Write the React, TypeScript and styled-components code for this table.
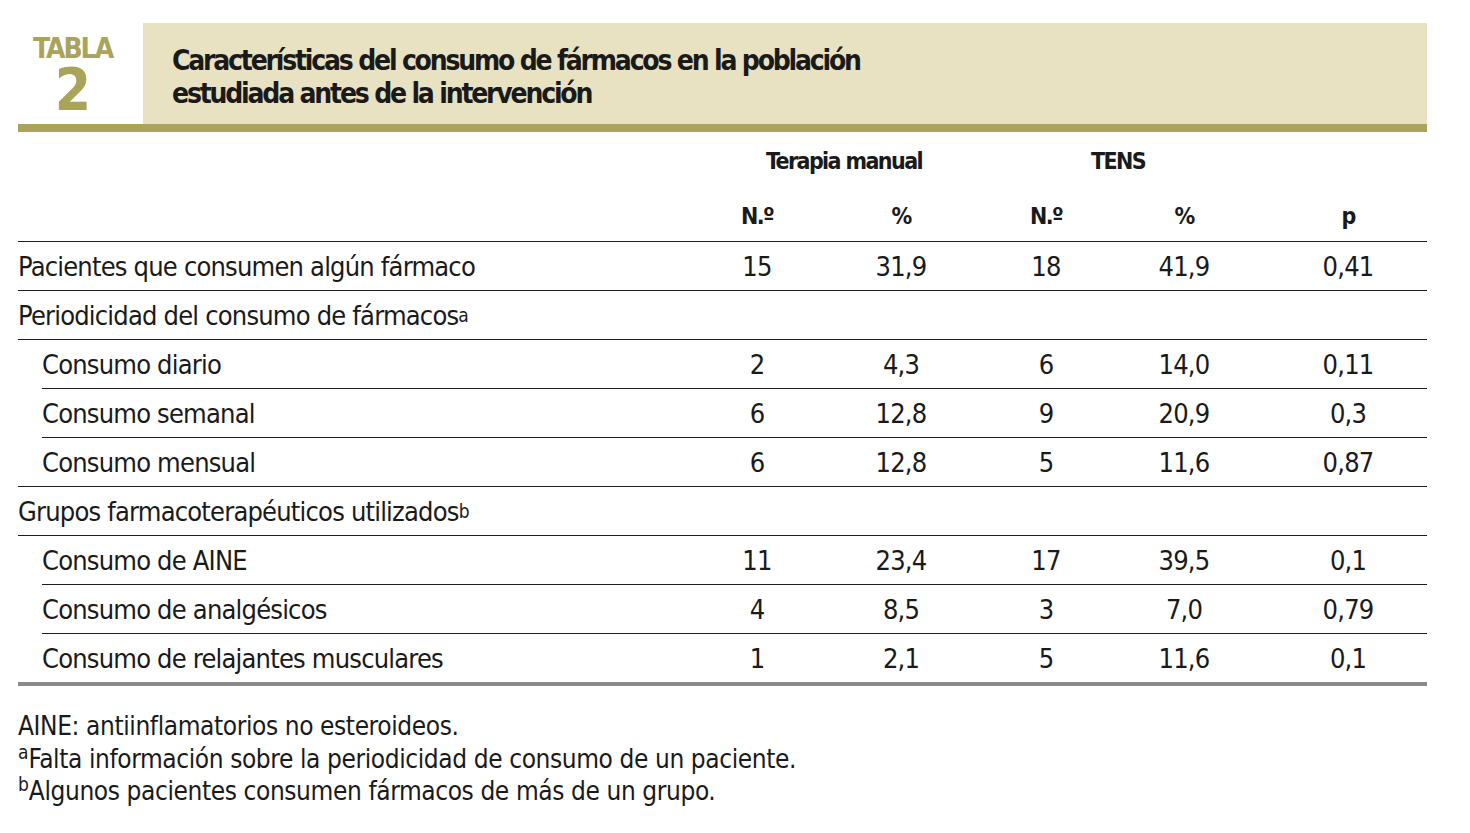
import React from "react";
import styled, { createGlobalStyle } from "styled-components";

const FONT = `"DejaVu Sans Condensed", "Liberation Sans", sans-serif`;

const Global = createGlobalStyle`
  html, body { margin: 0; padding: 0; background: #ffffff; }
  body { font-family: ${FONT}; color: #1a1a1a; }
`;

const Page = styled.div`
  width: 1409px;
  padding: 23px 0 0 18px;
`;

const Header = styled.div`
  display: flex;
  height: 101px;
`;

const Badge = styled.div`
  width: 125px;
  display: flex;
  flex-direction: column;
  align-items: center;
  color: #a9a35c;
  font-weight: 700;
  padding-right: 16px;
  box-sizing: border-box;
`;

const BadgeWord = styled.div`
  font-size: 28px;
  line-height: 26px;
  margin-top: 13px;
  letter-spacing: -2px;
`;

const BadgeNum = styled.div`
  font-size: 58px;
  line-height: 52px;
  margin-top: 2px;
  letter-spacing: -1px;
`;

const TitleBox = styled.div`
  flex: 1;
  background: #e8e2c3;
  padding: 21px 0 0 29px;
  font-weight: 700;
  font-size: 28px;
  line-height: 33px;
  letter-spacing: -2.2px;
  color: #1a1a1a;
`;

const OliveBar = styled.div`
  height: 8px;
  background: #a9a35c;
`;

const Grid = styled.div`
  display: grid;
  grid-template-columns: 667px 144px 144px 146px 130px 178px;
  align-items: center;
  font-size: 27px;
  letter-spacing: -0.8px;
`;

const Row = styled.div<{ $h: number }>`
  display: contents;
  & > div { height: ${(p) => p.$h}px; }
`;

const Cell = styled.div<{ $align?: "left" | "center"; $indent?: number; $span?: number; $shift?: number }>`
  display: flex;
  align-items: center;
  justify-content: ${(p) => (p.$align === "left" ? "flex-start" : "center")};
  padding-left: ${(p) => (p.$indent ?? 0) + (p.$shift ?? 0)}px;
  grid-column: span ${(p) => p.$span ?? 1};
  white-space: nowrap;
`;

const HeadCell = styled(Cell)`
  font-weight: 700;
  font-size: 23px;
  letter-spacing: -1.6px;
`;

const Rule = styled.div<{ $inset: number }>`
  grid-column: 1 / -1;
  height: 1px;
  background: #1e1e1e;
  margin-left: ${(p) => p.$inset}px;
`;

const ThickRule = styled.div`
  grid-column: 1 / -1;
  height: 4px;
  background: #8a8a8a;
`;

const Sup = styled.sup`
  font-size: 19px;
  line-height: 0;
  vertical-align: 9px;
  letter-spacing: 0;
`;

const Notes = styled.div`
  margin-top: 24px;
  font-size: 26px;
  line-height: 32.5px;
  letter-spacing: -0.4px;
`;

type DataRow = {
  label: React.ReactNode;
  indent: number;
  rule: number;
  values?: string[];
};

const rows: DataRow[] = [
  { label: "Pacientes que consumen algún fármaco", indent: 0, rule: 0, values: ["15", "31,9", "18", "41,9", "0,41"] },
  { label: <>Periodicidad del consumo de fármacos<Sup>a</Sup></>, indent: 0, rule: 0 },
  { label: "Consumo diario", indent: 24, rule: 0, values: ["2", "4,3", "6", "14,0", "0,11"] },
  { label: "Consumo semanal", indent: 24, rule: 24, values: ["6", "12,8", "9", "20,9", "0,3"] },
  { label: "Consumo mensual", indent: 24, rule: 24, values: ["6", "12,8", "5", "11,6", "0,87"] },
  { label: <>Grupos farmacoterapéuticos utilizados<Sup>b</Sup></>, indent: 0, rule: 0 },
  { label: "Consumo de AINE", indent: 24, rule: 0, values: ["11", "23,4", "17", "39,5", "0,1"] },
  { label: "Consumo de analgésicos", indent: 24, rule: 24, values: ["4", "8,5", "3", "7,0", "0,79"] },
  { label: "Consumo de relajantes musculares", indent: 24, rule: 24, values: ["1", "2,1", "5", "11,6", "0,1"] },
];

export default function App() {
  return (
    <>
      <Global />
      <Page>
        <Header>
          <Badge>
            <BadgeWord>TABLA</BadgeWord>
            <BadgeNum>2</BadgeNum>
          </Badge>
          <TitleBox>
            Características del consumo de fármacos en la población
            <br />
            estudiada antes de la intervención
          </TitleBox>
        </Header>
        <OliveBar />
        <Grid>
          <Row $h={58}>
            <Cell />
            <HeadCell $span={2} $shift={30}>Terapia manual</HeadCell>
            <HeadCell $span={2} $shift={14}>TENS</HeadCell>
            <Cell />
          </Row>
          <Row $h={51}>
            <Cell />
            <HeadCell>N.º</HeadCell>
            <HeadCell>%</HeadCell>
            <HeadCell>N.º</HeadCell>
            <HeadCell>%</HeadCell>
            <HeadCell $shift={20}>p</HeadCell>
          </Row>
          {rows.map((r, i) => (
            <React.Fragment key={i}>
              <Rule $inset={r.rule} />
              <Row $h={48}>
                <Cell $align="left" $indent={r.indent}>{r.label}</Cell>
                {(r.values ?? ["", "", "", "", ""]).map((v, j) => (
                  <Cell key={j} $shift={j === 4 ? 20 : 0}>{v}</Cell>
                ))}
              </Row>
            </React.Fragment>
          ))}
          <ThickRule />
        </Grid>
        <Notes>
          <div>AINE: antiinflamatorios no esteroideos.</div>
          <div><Sup>a</Sup>Falta información sobre la periodicidad de consumo de un paciente.</div>
          <div><Sup>b</Sup>Algunos pacientes consumen fármacos de más de un grupo.</div>
        </Notes>
      </Page>
    </>
  );
}
